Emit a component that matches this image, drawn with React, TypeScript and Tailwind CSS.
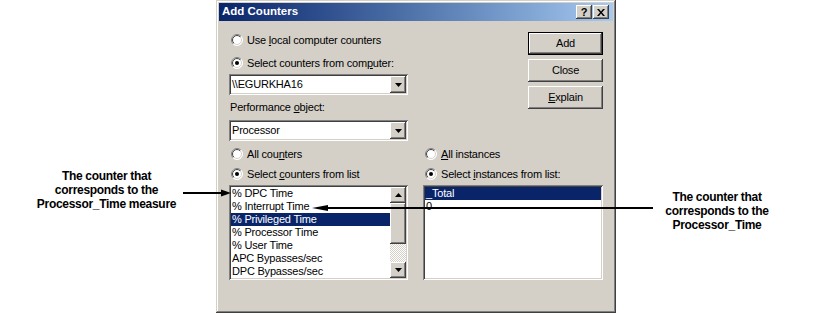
import { useId } from "react";

const raised =
  "shadow-[inset_-1px_-1px_0_#404040,inset_1px_1px_0_#ffffff,inset_-2px_-2px_0_#808080,inset_2px_2px_0_#d4d0c8]";
const sunken =
  "shadow-[inset_1px_1px_0_#808080,inset_-1px_-1px_0_#ffffff,inset_2px_2px_0_#404040,inset_-2px_-2px_0_#d4d0c8]";

const Radio = ({ checked }: { checked?: boolean }) => {
  const id = useId().replace(/:/g, "");
  return (
    <svg width="12" height="12" viewBox="0 0 12 12" className="shrink-0">
      <defs>
        <linearGradient id={`o${id}`} x1="0" y1="0" x2="1" y2="1">
          <stop offset="0.5" stopColor="#808080" />
          <stop offset="0.5" stopColor="#ffffff" />
        </linearGradient>
        <linearGradient id={`i${id}`} x1="0" y1="0" x2="1" y2="1">
          <stop offset="0.5" stopColor="#404040" />
          <stop offset="0.5" stopColor="#d4d0c8" />
        </linearGradient>
      </defs>
      <circle cx="6" cy="6" r="5.5" fill="#fff" stroke={`url(#o${id})`} />
      <circle cx="6" cy="6" r="4.5" fill="#fff" stroke={`url(#i${id})`} />
      {checked && <circle cx="6" cy="6" r="2" fill="#000" />}
    </svg>
  );
};

const Arrow = ({ up }: { up?: boolean }) => (
  <svg width="7" height="4" viewBox="0 0 7 4">
    <path d={up ? "M3.5 0L7 4H0z" : "M0 0h7L3.5 4z"} fill="#000" />
  </svg>
);

const RadioRow = ({ checked, children }: { checked?: boolean; children: React.ReactNode }) => (
  <div className="flex h-[16px] items-center gap-[4px] pl-[2px]">
    <Radio checked={checked} />
    <span className="whitespace-nowrap">{children}</span>
  </div>
);

const Combo = ({ value }: { value: string }) => (
  <div className={`flex h-[21px] w-[179px] items-center bg-white p-[2px] ${sunken}`}>
    <span className="flex-1 pl-[1px]">{value}</span>
    <div className={`flex h-[17px] w-[16px] items-center justify-center bg-[#d4d0c8] ${raised}`}>
      <Arrow />
    </div>
  </div>
);

const Button = ({ children, isDefault }: { children: React.ReactNode; isDefault?: boolean }) => (
  <div className={isDefault ? "border border-black" : ""}>
    <div
      className={`flex items-center justify-center bg-[#d4d0c8] ${raised} ${
        isDefault ? "h-[21px] w-[73px]" : "h-[23px] w-[75px]"
      }`}
    >
      <span>{children}</span>
    </div>
  </div>
);

const counters = [
  "% DPC Time",
  "% Interrupt Time",
  "% Privileged Time",
  "% Processor Time",
  "% User Time",
  "APC Bypasses/sec",
  "DPC Bypasses/sec",
];

const Dialog = () => (
  <div className="flex h-[313px] w-[400px] shrink-0 flex-col bg-[#d4d0c8] p-[3px] shadow-[inset_-1px_-1px_0_#404040,inset_1px_1px_0_#d4d0c8,inset_-2px_-2px_0_#808080,inset_2px_2px_0_#ffffff]">
    <div className="flex h-[18px] items-center bg-linear-to-r from-[#0a246a] to-[#a6caf0] pl-[3px] pr-[4px]">
      <span className="flex-1 text-[11.5px] font-bold text-white">Add Counters</span>
      <div className={`flex h-[14px] w-[16px] items-center justify-center bg-[#d4d0c8] text-[11px] font-bold leading-none ${raised}`}>
        ?
      </div>
      <div className={`ml-[1px] flex h-[14px] w-[16px] items-center justify-center bg-[#d4d0c8] ${raised}`}>
        <svg width="8" height="7" viewBox="0 0 8 7">
          <path d="M0 0h2l2 2.5L6 0h2L5 3.5 8 7H6L4 4.5 2 7H0l3-3.5z" fill="#000" />
        </svg>
      </div>
    </div>

    <div className="flex flex-col px-[10px] text-[11px] tracking-[-0.2px] text-black">
      <div className="flex">
        <div className="flex w-[179px] flex-col">
          <div className="mt-[11px]">
            <RadioRow>
              Use <u>l</u>ocal computer counters
            </RadioRow>
          </div>
          <div className="mt-[7px]">
            <RadioRow checked>
              Select counters from com<u>p</u>uter:
            </RadioRow>
          </div>
          <div className="mt-[3px]">
            <Combo value="\\EGURKHA16" />
          </div>
          <div className="mt-[5px] flex h-[14px] items-center pl-[1px]">
            <span>
              Performance <u>o</u>bject:
            </span>
          </div>
          <div className="mt-[6px]">
            <Combo value="Processor" />
          </div>
        </div>
        <div className="ml-auto flex flex-col gap-[4px] pt-[11px]">
          <Button isDefault>Add</Button>
          <Button>Close</Button>
          <Button>
            <u>E</u>xplain
          </Button>
        </div>
      </div>

      <div className="mt-[5px] grid grid-cols-[179px_180px] gap-x-[15px]">
        <RadioRow>
          All cou<u>n</u>ters
        </RadioRow>
        <RadioRow>
          <u>A</u>ll instances
        </RadioRow>
        <div className="mt-[4px]">
          <RadioRow checked>
            Select <u>c</u>ounters from list
          </RadioRow>
        </div>
        <div className="mt-[4px]">
          <RadioRow checked>
            Select <u>i</u>nstances from list:
          </RadioRow>
        </div>

        <div className={`mt-[3px] flex h-[95px] bg-white p-[2px] ${sunken}`}>
          <div className="flex flex-1 flex-col">
            {counters.map((c, i) => (
              <div
                key={c}
                className={`flex h-[13px] items-center whitespace-nowrap pl-[1px] ${
                  i === 2 ? "bg-[#0a246a] text-white" : ""
                }`}
              >
                {c}
              </div>
            ))}
          </div>
          <div className="flex w-[16px] flex-col">
            <div className={`flex h-[16px] items-center justify-center bg-[#d4d0c8] ${raised}`}>
              <Arrow up />
            </div>
            <div className={`h-[41px] bg-[#d4d0c8] ${raised}`} />
            <div className="flex-1 bg-[repeating-conic-gradient(#ffffff_0_25%,#d4d0c8_0_50%)] bg-[length:2px_2px]" />
            <div className={`flex h-[16px] items-center justify-center bg-[#d4d0c8] ${raised}`}>
              <Arrow />
            </div>
          </div>
        </div>

        <div className={`mt-[3px] flex h-[95px] flex-col bg-white p-[2px] ${sunken}`}>
          <div className="flex h-[13px] items-center bg-[#0a246a] pl-[1px] text-white">_Total</div>
          <div className="flex h-[13px] items-center pl-[1px]">0</div>
        </div>
      </div>
    </div>
  </div>
);

export default function App() {
  return (
    <div className="relative flex h-[313px] w-[838px] bg-white font-['Liberation_Sans',Arial,sans-serif] text-black">
      <div className="w-[216px] shrink-0 pr-[3px] pt-[169px] text-center text-[12px] font-bold leading-[14px] tracking-[-0.3px]">
        The counter that
        <br />
        corresponds to the
        <br />
        Processor_Time measure
      </div>
      <Dialog />
      <div className="flex-1 pr-[20px] pt-[190px] text-center text-[12px] font-bold leading-[14px] tracking-[-0.3px]">
        The counter that
        <br />
        corresponds to the
        <br />
        Processor_Time
      </div>

      <svg className="pointer-events-none absolute inset-0" width="838" height="313">
        <line x1="183" y1="193" x2="223" y2="193" stroke="#000" strokeWidth="2" />
        <path d="M231 193L221 189.5V196.5z" fill="#000" />
        <line x1="326" y1="208" x2="653" y2="208" stroke="#000" strokeWidth="2" />
        <path d="M312 208L328 205V211z" fill="#000" />
      </svg>
    </div>
  );
}
